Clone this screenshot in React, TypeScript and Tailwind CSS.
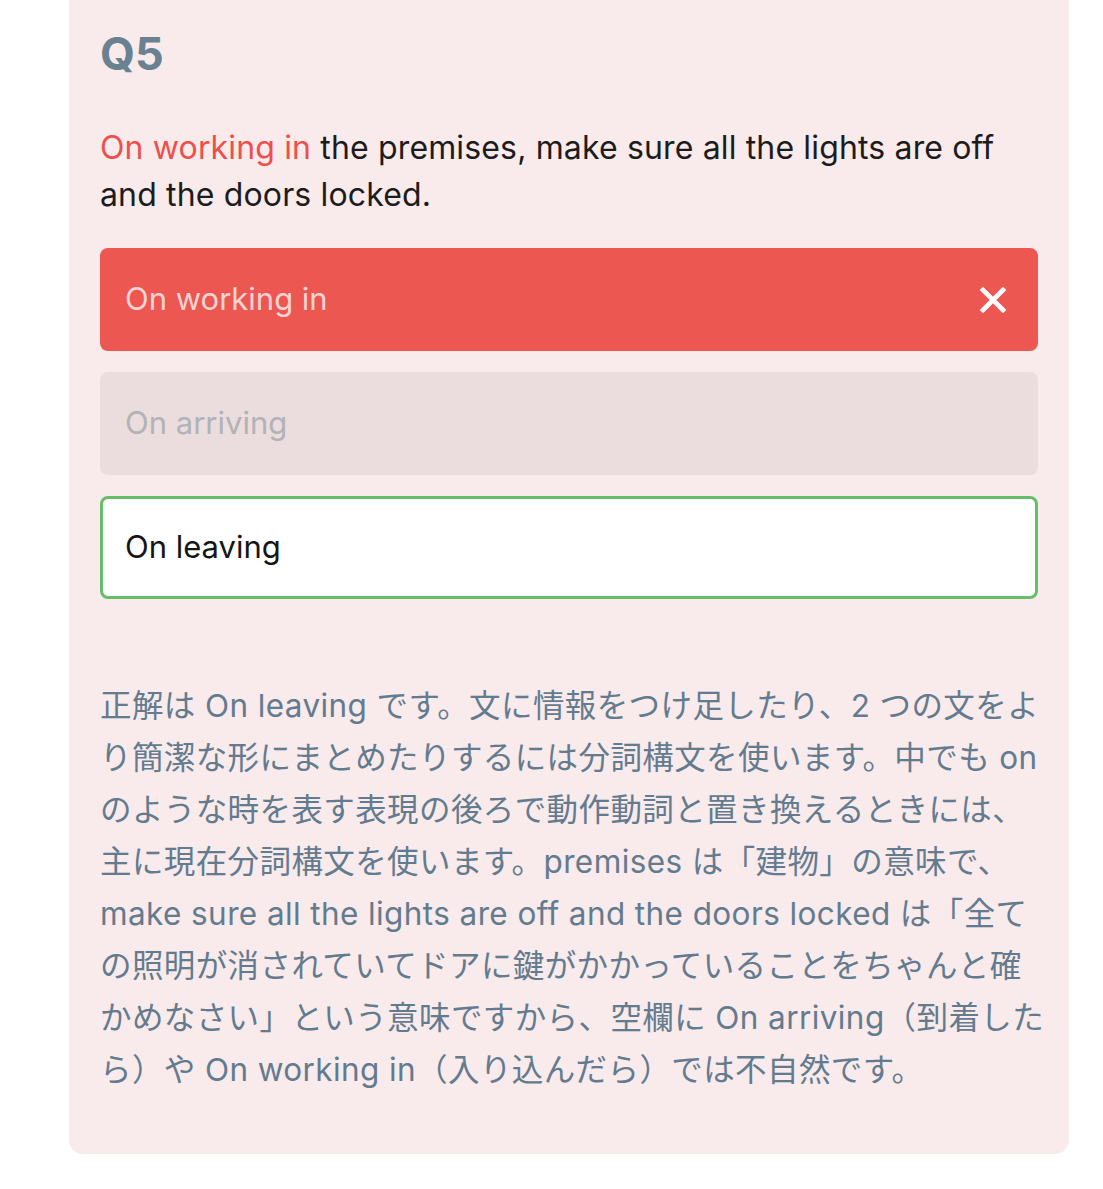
import React from "react";

const font = { fontFamily: 'Inter, "Noto Sans CJK JP", sans-serif' };

const XIcon = () => (
  <svg width="34" height="34" viewBox="0 0 24 24" fill="none" stroke="white" strokeWidth={3.4} strokeLinecap="square">
    <path d="M5 5l14 14M19 5L5 19" />
  </svg>
);

// explanation is broken into the same lines as the source
const explanation = [
  "正解は On leaving です。文に情報をつけ足したり、2 つの文をよ",
  "り簡潔な形にまとめたりするには分詞構文を使います。中でも on",
  "のような時を表す表現の後ろで動作動詞と置き換えるときには、",
  "主に現在分詞構文を使います。premises は「建物」の意味で、",
  "make sure all the lights are off and the doors locked は「全て",
  "の照明が消されていてドアに鍵がかかっていることをちゃんと確",
  "かめなさい」という意味ですから、空欄に On arriving（到着した",
  "ら）や On working in（入り込んだら）では不自然です。",
];

const App = () => (
  <div className="bg-white min-h-[1189px]" style={font}>
    <div className="ml-[69px] w-[1000px] bg-[#f9eaeb] rounded-b-[14px] px-[31px] pt-[26px] pb-[58px]">
      <h2 className="text-[45px] font-bold text-[#6a8192] leading-[56px]">Q5</h2>
      <p className="mt-[42px] text-[32px] tracking-[0.15px] leading-[47px] text-[#1c1c1c]">
        <span className="text-[#ef4f4a]">On working in</span> the premises, make sure all the lights are off and the doors locked.
      </p>
      <div className="mt-[30px] flex flex-col gap-[21px]">
        <div className="h-[103px] rounded-[8px] bg-[#ec5751] flex items-center justify-between pl-[25px] pr-[28px]">
          <span className="text-[31px] text-[#f6d3d2]">On working in</span>
          <XIcon />
        </div>
        <div className="h-[103px] rounded-[8px] bg-[#ebdcdd] flex items-center pl-[25px]">
          <span className="text-[31px] text-[#b1b3b6]">On arriving</span>
        </div>
        <div className="h-[103px] rounded-[8px] bg-white border-[3px] border-[#66bd6a] flex items-center pl-[22px]">
          <span className="text-[31px] text-[#161616]">On leaving</span>
        </div>
      </div>
      <div className="mt-[81px] text-[31.5px] tracking-[0.4px] leading-[52px] text-[#637b8e]">
        {explanation.map((line) => (
          <div key={line} className="whitespace-nowrap">
            {line}
          </div>
        ))}
      </div>
    </div>
  </div>
);

export default App;
